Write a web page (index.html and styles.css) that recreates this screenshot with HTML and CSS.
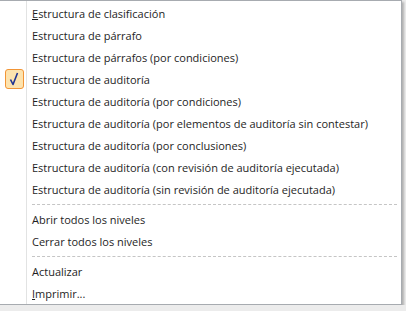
FILE: index.html
```html
<!DOCTYPE html>
<html>
<head>
	<title>Menu</title>
	<link rel="stylesheet" href="styles.css">
</head>
<body>
	<div class="menu">
		<div class="item"><span class="icon"></span><span class="label"><u>E</u>structura de clasificación</span></div>
		<div class="item"><span class="icon"></span><span class="label">Estructura de párrafo</span></div>
		<div class="item"><span class="icon"></span><span class="label">Estructura de párrafos (por condiciones)</span></div>
		<div class="item"><span class="icon checked"><svg width="17" height="18" viewBox="0 0 17 18"><path d="M4.5 9.5 L7 14.5 L11.5 3" fill="none" stroke="#1f3391" stroke-width="1.6" stroke-linejoin="round"/></svg></span><span class="label">Estructura de auditoría</span></div>
		<div class="item"><span class="icon"></span><span class="label">Estructura de auditoría (por condiciones)</span></div>
		<div class="item"><span class="icon"></span><span class="label">Estructura de auditoría (por elementos de auditoría sin contestar)</span></div>
		<div class="item"><span class="icon"></span><span class="label">Estructura de auditoría (por conclusiones)</span></div>
		<div class="item"><span class="icon"></span><span class="label">Estructura de auditoría (con revisión de auditoría ejecutada)</span></div>
		<div class="item"><span class="icon"></span><span class="label">Estructura de auditoría (sin revisión de auditoría ejecutada)</span></div>
		<div class="sep"></div>
		<div class="item"><span class="icon"></span><span class="label">Abrir todos los niveles</span></div>
		<div class="item"><span class="icon"></span><span class="label">Cerrar todos los niveles</span></div>
		<div class="sep"></div>
		<div class="item"><span class="icon"></span><span class="label">Actualizar</span></div>
		<div class="item"><span class="icon"></span><span class="label"><u>I</u>mprimir...</span></div>
	</div>
</body>
</html>
```

FILE: styles.css
```css
body {
	margin: 0;
	background: #ececec;
	font-family: "Open Sans", sans-serif;
	font-size: 11px;
	color: #1e1e1e;
}

.menu {
	position: relative;
	width: 402px;
	box-sizing: border-box;
	padding: 1px 0 0 0;
	background: #fff;
	border: 1px solid #a7abb0;
	border-left: none;
	box-shadow: 2px 2px 2px rgba(0, 0, 0, 0.25);
}

/* gutter line */
.menu::before {
	content: "";
	position: absolute;
	left: 26px;
	top: 0;
	bottom: 0;
	width: 1px;
	background: #e2e3e3;
}

.item {
	display: flex;
	align-items: center;
	height: 22px;
}

.icon {
	width: 19px;
	height: 20px;
	margin: 0 8px 0 5px;
	box-sizing: border-box;
	display: flex;
	align-items: center;
	justify-content: center;
}

.icon.checked {
	border: 1px solid #f29536;
	border-radius: 3px;
	background: #fde3ae;
}

.label {
	white-space: nowrap;
}

.sep {
	margin: 4px 4px 3px 32px;
	border-top: 1px dashed #c5c5c5;
}
```
